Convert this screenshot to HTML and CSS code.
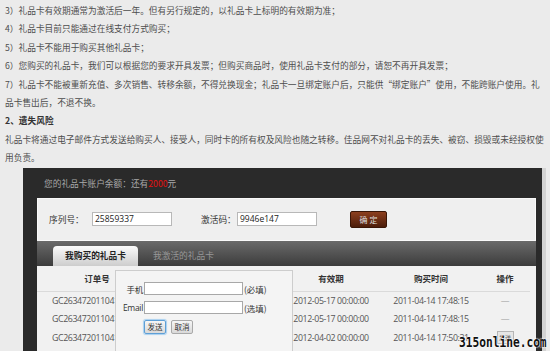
FILE: index.html
```html
<!DOCTYPE html>
<html lang="zh-CN">
<head>
    <meta charset="UTF-8">
    <title>礼品卡</title>
    <link rel="stylesheet" href="styles.css">
</head>
<body>
<div class="notes">
    <p>3）礼品卡有效期通常为激活后一年。但有另行规定的，以礼品卡上标明的有效期为准；</p>
    <p>4）礼品卡目前只能通过在线支付方式购买；</p>
    <p>5）礼品卡不能用于购买其他礼品卡；</p>
    <p>6）您购买的礼品卡，我们可以根据您的要求开具发票；但购买商品时，使用礼品卡支付的部分，请恕不再开具发票；</p>
    <p>7）礼品卡不能被重新充值、多次销售、转移余额，不得兑换现金；礼品卡一旦绑定账户后，只能供“绑定账户”使用，不能跨账户使用。礼</p>
    <p>品卡售出后，不退不换。</p>
    <p class="title">2、遗失风险</p>
    <p>礼品卡将通过电子邮件方式发送给购买人、接受人，同时卡的所有权及风险也随之转移。佳品网不对礼品卡的丢失、被窃、损毁或未经授权使</p>
    <p>用负责。</p>
</div>

<div class="panel">
    <div class="balance">您的礼品卡账户余额：还有<em>2000</em>元</div>

    <div class="activate">
        <label class="lbl">序列号：</label>
        <span class="ipt">25859337</span>
        <label class="lbl lbl2">激活码：</label>
        <span class="ipt">9946e147</span>
        <span class="btn_ok">确 定</span>
    </div>

    <div class="tabs">
        <span class="tab on">我购买的礼品卡</span>
        <span class="tab">我激活的礼品卡</span>
    </div>

    <div class="list">
        <table>
            <thead>
            <tr>
                <th class="c1">订单号</th>
                <th class="c_hide">礼品卡号</th>
                <th class="c2">有效期</th>
                <th class="c3">购买时间</th>
                <th class="c4">操作</th>
            </tr>
            </thead>
            <tbody>
            <tr>
                <td class="c1 no">GC2634720110414</td>
                <td class="c_hide"></td>
                <td>2012-05-17 00:00:00</td>
                <td>2011-04-14 17:48:15</td>
                <td class="dash">—</td>
            </tr>
            <tr>
                <td class="c1 no">GC2634720110414</td>
                <td class="c_hide"></td>
                <td>2012-05-17 00:00:00</td>
                <td>2011-04-14 17:48:15</td>
                <td class="dash">—</td>
            </tr>
            <tr>
                <td class="c1 no">GC2634720110414</td>
                <td class="c_hide"></td>
                <td>2012-04-02 00:00:00</td>
                <td>2011-04-14 17:50:31</td>
                <td><span class="send">发送</span></td>
            </tr>
            </tbody>
        </table>

        <div class="pop">
            <div class="row">
                <span class="p_lbl">手机</span>
                <span class="p_ipt"></span>
                <span class="p_tip">(必填)</span>
            </div>
            <div class="row">
                <span class="p_lbl">Email</span>
                <span class="p_ipt"></span>
                <span class="p_tip">(选填)</span>
            </div>
            <div class="row btns">
                <span class="p_btn focus">发送</span>
                <span class="p_btn">取消</span>
            </div>
        </div>
    </div>
</div>

<div class="mark">315online.com</div>
</body>
</html>
```

FILE: styles.css
```css
body, div, p, table, th, td, span, label, em {
    margin: 0;
    padding: 0;
}

body {
    position: relative;
    height: 351px;
    overflow: hidden;
    background-color: #ebebeb;
    font-family: "Noto Sans CJK SC", sans-serif;
    color: #4d4d4d;
}

em {
    font-style: normal;
}

/* 顶部说明文字 */
.notes {
    padding: 2px 5px 0;
    font-size: 8.7px;
    line-height: 18.4px;
    white-space: nowrap;
}

.notes .title {
    font-weight: bold;
    color: #333;
}

/* 黑色面板 */
.panel {
    margin-left: 23px;
    width: 499px;
    height: 184px;
    padding: 0 6px 0 14px;
    background-color: #2a2a2a;
    border-right: 4px solid #d3d3d3;
}

.balance {
    height: 30px;
    padding-left: 7px;
    line-height: 32px;
    font-size: 8.7px;
    color: #a9a9a9;
}

.balance em {
    color: #e21010;
}

.activate {
    display: flex;
    align-items: center;
    height: 41px;
    padding-left: 11px;
    background-color: #efefef;
    border: 1px solid #f9f9f9;
    font-size: 8.7px;
    color: #333;
    white-space: nowrap;
}

.activate .lbl {
    flex-shrink: 0;
    width: 43px;
}

.activate .lbl2 {
    width: 36px;
    margin-left: 29px;
}

.ipt {
    flex-shrink: 0;
    box-sizing: border-box;
    width: 80px;
    height: 14px;
    padding: 0 2px;
    background-color: #fff;
    border: 1px solid #b8b8b8;
    font-family: "Open Sans", sans-serif;
    font-size: 8.5px;
    line-height: 12px;
    color: #222;
}

.btn_ok {
    flex-shrink: 0;
    box-sizing: border-box;
    width: 37px;
    height: 17px;
    margin-left: 33px;
    background: linear-gradient(#8c3f1e, #4c1d0a);
    border: 1px solid #3a1606;
    border-radius: 2px;
    font-size: 8px;
    line-height: 15px;
    text-align: center;
    color: #ddd;
}

.tabs {
    display: flex;
    align-items: flex-end;
    height: 25px;
    background: linear-gradient(#6a6a6a, #3c3c3c);
}

.tab {
    height: 20px;
    margin-left: 15px;
    font-size: 8.7px;
    line-height: 20px;
    color: #979797;
}

.tab.on {
    width: 85px;
    margin-left: 16px;
    background: linear-gradient(#fbfbfb, #cdcdcd);
    border-radius: 4px 4px 0 0;
    text-align: center;
    font-weight: bold;
    color: #222;
}

/* 列表 */
.list {
    position: relative;
    height: 88px;
    background-color: #f1f1f1;
}

.list table {
    width: 493px;
    border-collapse: collapse;
    table-layout: fixed;
}

.list th {
    height: 25px;
    border-bottom: 1px solid #dadada;
    font-size: 8.5px;
    font-weight: bold;
    color: #333;
}

.list td {
    height: 18.5px;
    padding: 0;
    text-align: center;
    font-family: "Open Sans", sans-serif;
    font-size: 8.8px;
    letter-spacing: -0.4px;
    color: #555;
    white-space: nowrap;
    overflow: hidden;
}

.list .c1 { width: 120px; }
.list .c_hide { width: 123px; }
.list .c2 { width: 102px; }
.list .c3 { width: 98px; }
.list .c4 { width: 50px; }

.list td.no {
    text-align: left;
    padding-left: 15px;
}

.list td.dash {
    color: #999;
}

.send {
    display: inline-block;
    width: 15px;
    height: 11px;
    background-color: #e6e6e6;
    border: 1px solid #b5b5b5;
    font-family: "Noto Sans CJK SC", sans-serif;
    font-size: 6px;
    line-height: 11px;
    letter-spacing: 0;
    vertical-align: middle;
}

/* 弹出层 */
.pop {
    position: absolute;
    left: 78px;
    top: 4px;
    box-sizing: border-box;
    width: 178px;
    height: 90px;
    padding-top: 11px;
    background-color: #f4f4f4;
    border: 1px solid #cdcdcd;
    font-size: 8.5px;
    color: #333;
}

.pop .row {
    display: flex;
    align-items: center;
    height: 14px;
    margin-bottom: 5px;
}

.p_lbl {
    width: 27px;
    text-align: right;
    font-family: "Open Sans", "Noto Sans CJK SC", sans-serif;
    letter-spacing: -0.3px;
}

.p_ipt {
    box-sizing: border-box;
    width: 99px;
    height: 13px;
    margin-left: 1px;
    background-color: #fff;
    border: 1px solid #a8a8a8;
}

.p_tip {
    margin-left: 1px;
}

.pop .btns {
    padding-left: 28px;
    margin-top: 2px;
}

.p_btn {
    box-sizing: border-box;
    width: 22px;
    height: 14px;
    margin-right: 5px;
    background: linear-gradient(#f6f6f6, #d9d9d9);
    border: 1px solid #a9a9a9;
    border-radius: 2px;
    font-size: 7.5px;
    line-height: 12px;
    text-align: center;
}

.p_btn.focus {
    border-color: #5e9fd6;
    box-shadow: 0 0 1px 1px #a8d0f0;
}

/* 水印 */
.mark {
    position: absolute;
    right: -8px;
    bottom: 1px;
    font-family: "DejaVu Sans Mono", monospace;
    font-size: 14px;
    font-weight: bold;
    color: #111;
    text-shadow: 0 0 2px #fff, 0 0 2px #fff, 0 0 1px #fff;
    transform: scaleX(0.8);
}
```
